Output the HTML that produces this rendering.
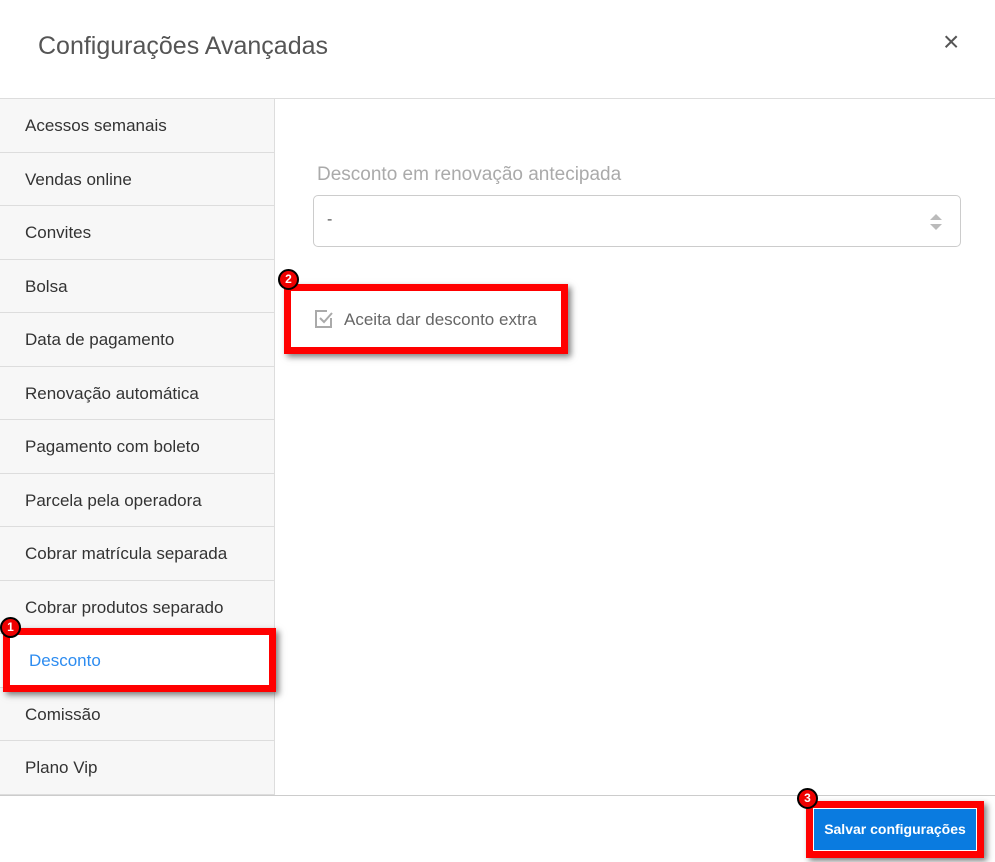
<!DOCTYPE html><html><head><style>
body{margin:0;width:995px;height:862px;background:#fff;font-family:"Liberation Sans",sans-serif;position:relative;overflow:hidden}
.h{position:absolute;left:38px;top:32px;font-size:25px;color:#555}
.x{position:absolute;left:943px;top:26px;font-size:28px;color:#555}
.hl{position:absolute;left:0;top:98px;width:995px;height:1px;background:#ddd}
.side{position:absolute;left:0;top:99px;width:274px;height:696px;background:#f7f7f7;border-right:1px solid #ddd}
.it{height:52.5px;border-bottom:1px solid #ddd;font-size:17px;color:#333;padding-left:25px;line-height:54px;box-sizing:content-box}
.sel{background:#fff;color:#2d8cf0;padding-left:29px}
.fl{position:absolute;left:0;top:795px;width:995px;height:1px;background:#ccc}
.lab{position:absolute;left:317px;top:164px;font-size:19px;color:#aaa}
.sel2{position:absolute;left:313px;top:195px;width:646px;height:50px;border:1px solid #ccc;border-radius:5px}
.red{position:absolute;border:7px solid #f00;box-shadow:3px 3px 6px rgba(0,0,0,.5);box-sizing:border-box}
.b{position:absolute;width:17px;height:17px;border-radius:50%;background:#e00;border:2px solid #000;color:#fff;font-size:12px;font-weight:bold;text-align:center;line-height:17px}
</style></head><body>
<div class="h">Configurações Avançadas</div><div class="x">×</div><div class="hl"></div>
<div class="side">
<div class="it">Acessos semanais</div><div class="it">Vendas online</div><div class="it">Convites</div><div class="it">Bolsa</div><div class="it">Data de pagamento</div><div class="it">Renovação automática</div><div class="it">Pagamento com boleto</div><div class="it">Parcela pela operadora</div><div class="it">Cobrar matrícula separada</div><div class="it">Cobrar produtos separado</div><div class="it sel">Desconto</div><div class="it">Comissão</div><div class="it">Plano Vip</div>
</div>
<div class="fl"></div>
<div class="lab">Desconto em renovação antecipada</div>
<div class="sel2"><span style="position:absolute;left:13px;top:15px;color:#555">-</span>
<svg style="position:absolute;left:615px;top:16px" width="14" height="20"><path d="M1 8L7 2L13 8Z M1 12L7 18L13 12Z" fill="#bbb"/></svg></div>
<svg style="position:absolute;left:314px;top:309px" width="20" height="20" fill="none" stroke="#aaa" stroke-width="2"><path d="M17 9v9H2V2h11"/><path d="M6 9l4 4 8-9"/></svg>
<div style="position:absolute;left:344px;top:310px;font-size:17px;color:#666">Aceita dar desconto extra</div>
<div style="position:absolute;left:814px;top:809px;width:162px;height:41px;background:#0a7be0;color:#fff;font-size:14px;font-weight:bold;text-align:center;line-height:41px">Salvar configurações</div>
<div class="red" style="left:3px;top:628px;width:273px;height:64px"></div>
<div class="red" style="left:284px;top:284px;width:284px;height:70px"></div>
<div class="red" style="left:806px;top:801px;width:178px;height:57px"></div>
<div class="b" style="left:0;top:617px">1</div>
<div class="b" style="left:278px;top:269px">2</div>
<div class="b" style="left:797px;top:788px">3</div>
</body></html>
